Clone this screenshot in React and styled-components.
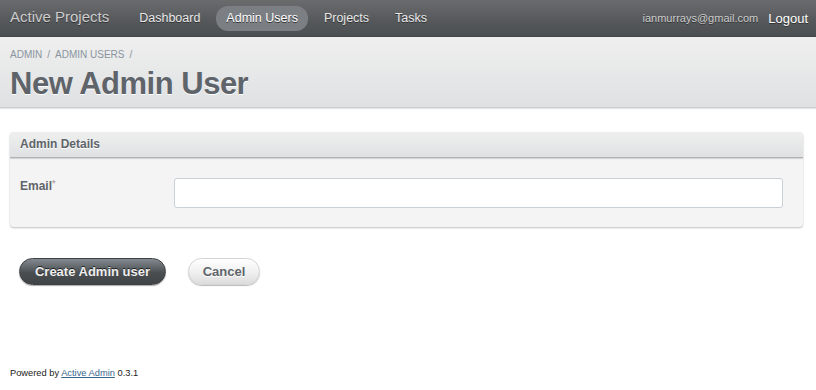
import React from "react";
import styled, { createGlobalStyle } from "styled-components";

const Global = createGlobalStyle`
  html, body { margin: 0; padding: 0; background: #fff; }
  body { font-family: "Liberation Sans", Arial, sans-serif; color: #323537; }
  * { box-sizing: border-box; }
`;

const Page = styled.div`
  width: 816px;
  height: 390px;
  display: flex;
  flex-direction: column;
`;

const Header = styled.div`
  height: 37px;
  display: flex;
  align-items: center;
  padding: 0 8px 0 10px;
  background: linear-gradient(to bottom, #6a6b6d 0%, #55585b 60%, #4b4f52 100%);
  border-bottom: 1px solid #43474a;
  box-shadow: 0 1px 2px rgba(0,0,0,0.3);
`;

const Brand = styled.div`
  font-size: 15px;
  color: #cdcdcd;
  text-shadow: 0 1px 0 #333;
  margin-right: 20px;
  padding-bottom: 3px;
`;

const Nav = styled.div`
  display: flex;
  align-items: center;
  flex: 1;
`;

const NavItem = styled.div`
  font-size: 12.5px;
  color: ${p => (p.$active ? "#fff" : "#e8e8e8")};
  background: ${p => (p.$active ? "#7b7f83" : "transparent")};
  border-radius: 12px;
  padding: 5px 10px 6px;
  margin-right: 6px;
  text-shadow: 0 1px 0 #333;
`;

const Right = styled.div`
  display: flex;
  align-items: center;
  gap: 10px;
`;

const Email = styled.span`
  font-size: 11px;
  color: #cdcdcd;
  text-shadow: 0 1px 0 #333;
`;

const Logout = styled.span`
  font-size: 13px;
  color: #fff;
  text-shadow: 0 1px 0 #333;
`;

const TitleBar = styled.div`
  height: 71px;
  padding: 10px 10px 0;
  background: linear-gradient(to bottom, #efefef 0%, #dfe1e2 100%);
  border-bottom: 1px solid #cdcdcd;
  box-shadow: 0 1px 1px #e6e6e6;
`;

const Crumbs = styled.div`
  font-size: 10px;
  color: #8a949e;
  margin-top: 2px;
  span { margin: 0 5px; }
`;

const Title = styled.h1`
  margin: 6px 0 0;
  font-size: 31px;
  font-weight: bold;
  color: #5e6469;
  text-shadow: 0 1px 0 #fff;
  line-height: 36px;
  letter-spacing: -0.5px;
`;

const Main = styled.div`
  padding: 24px 13px 0 10px;
`;

const Panel = styled.div`
  background: #f4f4f4;
  border-radius: 4px;
  box-shadow: 0 1px 2px #bfbfbf;
  height: 95px;
`;

const PanelHead = styled.div`
  height: 26px;
  padding: 5px 10px;
  font-size: 12px;
  font-weight: bold;
  color: #5e6469;
  text-shadow: 0 1px 0 #fff;
  background: linear-gradient(to bottom, #efefef 0%, #dfe1e2 100%);
  border-bottom: 1px solid #b0b2b4;
  border-radius: 4px 4px 0 0;
  box-shadow: 0 1px 1px #d2d2d2;
`;

const Row = styled.div`
  display: flex;
  padding: 20px 20px 0 10px;
`;

const Label = styled.label`
  width: 154px;
  font-size: 12px;
  font-weight: bold;
  color: #5e6469;
  padding-top: 1px;
  sup { color: #b8a8a8; font-size: 9px; vertical-align: top; position: relative; top: -1px; }
`;

const Input = styled.input`
  flex: 1;
  height: 30px;
  border: 1px solid #c9d0d6;
  border-radius: 3px;
  background: #fff;
  outline: none;
`;

const Actions = styled.div`
  display: flex;
  align-items: center;
  gap: 22px;
  padding: 31px 0 0 9px;
`;

const Button = styled.button`
  font-family: "Liberation Sans", Arial, sans-serif;
  font-size: 13px;
  font-weight: bold;
  height: 27px;
  border-radius: 14px;
  padding: 0;
  width: ${p => (p.$primary ? "147px" : "72px")};
  cursor: pointer;
  ${p =>
    p.$primary
      ? `
    color: #efefef;
    background: linear-gradient(to bottom, #838a90 0%, #4a4e51 55%, #414447 100%);
    border: 1px solid #3e4143;
    text-shadow: 0 -1px 0 #222;
    box-shadow: 0 1px 1px #aaa;
  `
      : `
    color: #5e6469;
    background: linear-gradient(to bottom, #ffffff 0%, #efefef 55%, #dcdcdc 100%);
    border: 1px solid #d4d4d4;
    text-shadow: 0 1px 0 #fff;
    box-shadow: 0 1px 1px #bbb;
  `}
`;

const Spacer = styled.div`
  flex: 1;
`;

const Footer = styled.div`
  padding: 0 10px 12px;
  font-size: 9.3px;
  color: #222;
  a { color: #38678b; text-decoration: underline; }
`;

export default function App() {
  return (
    <Page>
      <Global />
      <Header>
        <Brand>Active Projects</Brand>
        <Nav>
          <NavItem>Dashboard</NavItem>
          <NavItem $active>Admin Users</NavItem>
          <NavItem>Projects</NavItem>
          <NavItem>Tasks</NavItem>
        </Nav>
        <Right>
          <Email>ianmurrays@gmail.com</Email>
          <Logout>Logout</Logout>
        </Right>
      </Header>
      <TitleBar>
        <Crumbs>
          ADMIN<span>/</span>ADMIN USERS<span>/</span>
        </Crumbs>
        <Title>New Admin User</Title>
      </TitleBar>
      <Main>
        <Panel>
          <PanelHead>Admin Details</PanelHead>
          <Row>
            <Label>
              Email<sup>*</sup>
            </Label>
            <Input type="text" />
          </Row>
        </Panel>
        <Actions>
          <Button $primary>Create Admin user</Button>
          <Button>Cancel</Button>
        </Actions>
      </Main>
      <Spacer />
      <Footer>
        Powered by <a href="#">Active Admin</a> 0.3.1
      </Footer>
    </Page>
  );
}
